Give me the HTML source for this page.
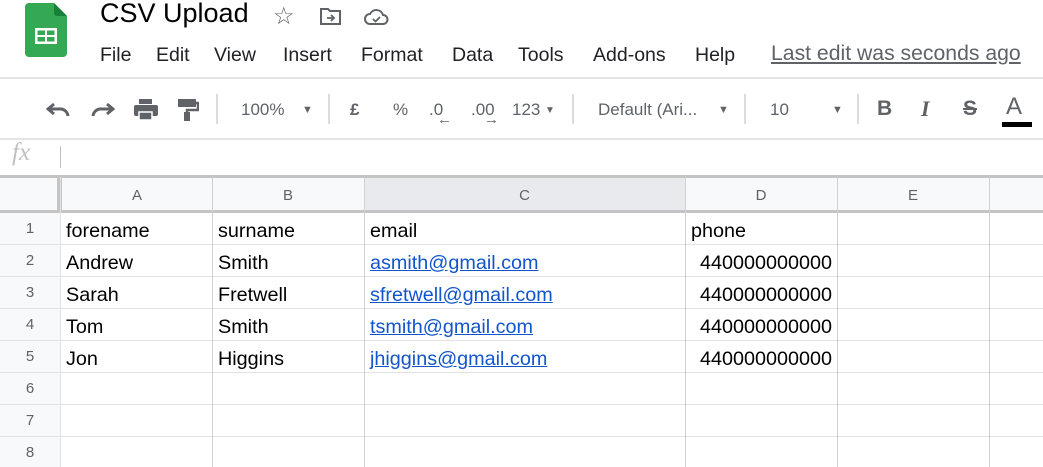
<!DOCTYPE html>
<html><head><meta charset="utf-8"><style>
*{margin:0;padding:0;box-sizing:border-box}
body{width:1043px;height:467px;overflow:hidden;background:#fff;font-family:"Liberation Sans",Arial,sans-serif;position:relative;color:#000}
.a{position:absolute}
.menu span{position:absolute;top:44px;font-size:19.5px;color:#202124}
.tb{color:#5f6368;font-size:17px;position:absolute;top:100px}
.sep{position:absolute;top:94px;width:2px;height:30px;background:#dadce0}
.hl{position:absolute;left:0;width:1043px;height:1px;background:#e2e2e2}
.vl{position:absolute;top:177px;width:1px;height:290px;background:#e2e2e2}
.ch{position:absolute;top:187px;font-size:15px;color:#5f6368;text-align:center}
.rn{position:absolute;left:0;width:60px;text-align:center;font-size:15px;color:#5f6368}
.c{position:absolute;font-size:19.8px}
.l{color:#1155cc;text-decoration:underline}
</style></head><body>
<svg class="a" style="left:25px;top:3px" width="42" height="55" viewBox="0 0 42 55">
<path d="M4 0H29L42 13V50a4 4 0 0 1-4 4H4a4 4 0 0 1-4-4V4a4 4 0 0 1 4-4z" fill="#34a853"/>
<path d="M29 0L42 13H32a3 3 0 0 1-3-3z" fill="#188038"/>
<rect x="10" y="25" width="22" height="16" fill="#fff"/>
<rect x="12.5" y="27.5" width="7.5" height="4.5" fill="#34a853"/><rect x="22" y="27.5" width="7.5" height="4.5" fill="#34a853"/>
<rect x="12.5" y="34" width="7.5" height="4.5" fill="#34a853"/><rect x="22" y="34" width="7.5" height="4.5" fill="#34a853"/>
</svg>
<div class="a" style="left:100px;top:-2px;font-size:27px;color:#000">CSV Upload</div>
<div class="a" style="left:273px;top:2px;font-size:24px;color:#5f6368">☆</div>
<svg class="a" style="left:320px;top:7px" width="22" height="18"><path d="M1 2h7l2 2h10v13H1z" fill="none" stroke="#5f6368" stroke-width="2"/><path d="M7 11h7M11 8l3 3-3 3" stroke="#5f6368" stroke-width="1.8" fill="none"/></svg>
<svg class="a" style="left:364px;top:8px" width="26" height="18"><path d="M6 16a5 5 0 0 1 0-10 7 7 0 0 1 13 1 4.5 4.5 0 0 1 0 9z" fill="none" stroke="#5f6368" stroke-width="2"/><path d="M9 11l2.5 2.5L16 9" stroke="#5f6368" stroke-width="1.8" fill="none"/></svg>
<div class="menu">
<span style="left:100px">File</span><span style="left:156px">Edit</span><span style="left:214px">View</span><span style="left:283px">Insert</span><span style="left:361px">Format</span><span style="left:452px">Data</span><span style="left:518px">Tools</span><span style="left:593px">Add-ons</span><span style="left:695px">Help</span>
<span style="left:771px;color:#5f6368;text-decoration:underline;font-size:21.2px;top:42px">Last edit was seconds ago</span>
</div>
<div class="hl" style="top:77px;height:2px;background:#e3e3e3"></div>
<svg class="a" style="left:46px;top:100px" width="26" height="18"><path d="M8 4L2 9l6 5" fill="none" stroke="#5f6368" stroke-width="3"/><path d="M3 9h10a8 8 0 0 1 9 7" fill="none" stroke="#5f6368" stroke-width="3"/></svg>
<svg class="a" style="left:89px;top:100px" width="26" height="18"><path d="M18 4l6 5-6 5" fill="none" stroke="#5f6368" stroke-width="3"/><path d="M23 9H13a8 8 0 0 0-9 7" fill="none" stroke="#5f6368" stroke-width="3"/></svg>
<svg class="a" style="left:133px;top:98px" width="26" height="24"><rect x="6" y="1" width="13" height="5" fill="#5f6368"/><rect x="1" y="7" width="24" height="11" rx="2" fill="#5f6368"/><rect x="6" y="14" width="13" height="8" fill="#5f6368" stroke="#fff" stroke-width="1.5"/></svg>
<svg class="a" style="left:177px;top:98px" width="22" height="24"><rect x="1" y="1" width="18" height="8" fill="#5f6368"/><path d="M19 5h2v7H10v10" fill="none" stroke="#5f6368" stroke-width="2.5"/><rect x="7" y="14" width="6" height="9" fill="#5f6368"/></svg>
<div class="sep" style="left:216px"></div>
<div class="tb" style="left:241px">100%</div>
<div class="tb" style="left:302px;font-size:11px;top:104px">▼</div>
<div class="sep" style="left:328px"></div>
<div class="tb" style="left:350px;font-weight:bold">£</div>
<div class="tb" style="left:393px">%</div>
<div class="tb" style="left:429px">.0</div>
<div class="a" style="left:437px;top:111px;font-size:15px;color:#5f6368;font-weight:bold">←</div>
<div class="tb" style="left:471px">.00</div>
<div class="a" style="left:484px;top:111px;font-size:15px;color:#5f6368;font-weight:bold">→</div>
<div class="tb" style="left:512px">123</div>
<div class="tb" style="left:545px;font-size:10px;top:105px">▼</div>
<div class="sep" style="left:572px"></div>
<div class="tb" style="left:598px">Default (Ari...</div>
<div class="tb" style="left:718px;font-size:11px;top:104px">▼</div>
<div class="sep" style="left:744px"></div>
<div class="tb" style="left:770px">10</div>
<div class="tb" style="left:832px;font-size:11px;top:104px">▼</div>
<div class="sep" style="left:857px"></div>
<div class="tb" style="left:877px;font-size:21px;top:97px;font-weight:bold">B</div>
<div class="tb" style="left:921px;font-size:22px;top:96px;font-style:italic;font-family:'Liberation Serif',serif;font-weight:bold">I</div>
<div class="tb" style="left:963px;font-size:21px;top:97px;text-decoration:line-through;font-weight:bold">S</div>
<div class="tb" style="left:1006px;font-size:24px;top:93px">A</div>
<div class="a" style="left:1002px;top:122px;width:30px;height:5px;background:#000"></div>
<div class="hl" style="top:138px;height:2px;background:#e3e3e3"></div>
<div class="a" style="left:12px;top:139px;font-size:25px;font-style:italic;font-family:'Liberation Serif',serif;color:#c0c0c0">fx</div>
<div class="a" style="left:60px;top:146px;width:1px;height:22px;background:#c0c0c0"></div>
<div class="a" style="left:0;top:176px;width:1043px;height:36px;background:#f8f9fa"></div>
<div class="a" style="left:364px;top:176px;width:321px;height:36px;background:#e8eaed"></div>
<div class="a" style="left:0;top:175px;width:1043px;height:3px;background:#c4c4c4"></div>
<div class="a" style="left:0;top:212px;width:60px;height:255px;background:#f8f9fa"></div>
<div class="a" style="left:0;top:210px;width:1043px;height:3px;background:#c4c4c4"></div>
<div class="a" style="left:57px;top:176px;width:5px;height:37px;background:#c4c4c4"></div>
<div class="hl" style="top:244px"></div><div class="hl" style="top:276px"></div><div class="hl" style="top:308px"></div><div class="hl" style="top:340px"></div><div class="hl" style="top:372px"></div><div class="hl" style="top:404px"></div><div class="hl" style="top:436px"></div>
<div class="vl" style="left:60px"></div><div class="vl" style="left:212px;background:#d0d0d0"></div><div class="vl" style="left:364px;background:#d0d0d0"></div><div class="vl" style="left:685px;background:#d0d0d0"></div><div class="vl" style="left:837px;background:#d0d0d0"></div><div class="vl" style="left:989px;background:#d0d0d0"></div>
<div class="ch" style="left:62px;width:150px">A</div><div class="ch" style="left:212px;width:152px">B</div><div class="ch" style="left:364px;width:321px">C</div><div class="ch" style="left:685px;width:152px">D</div><div class="ch" style="left:837px;width:152px">E</div>
<div class="rn" style="top:220px">1</div><div class="rn" style="top:252px">2</div><div class="rn" style="top:284px">3</div><div class="rn" style="top:316px">4</div><div class="rn" style="top:348px">5</div><div class="rn" style="top:380px">6</div><div class="rn" style="top:412px">7</div><div class="rn" style="top:444px">8</div>
<div class="c" style="left:66px;top:220px">forename</div><div class="c" style="left:218px;top:220px">surname</div><div class="c" style="left:370px;top:220px">email</div><div class="c" style="left:691px;top:220px">phone</div>
<div class="c" style="left:66px;top:252px">Andrew</div><div class="c" style="left:218px;top:252px">Smith</div><div class="c l" style="left:370px;top:252px">asmith@gmail.com</div><div class="c" style="left:700px;top:252px">440000000000</div>
<div class="c" style="left:66px;top:284px">Sarah</div><div class="c" style="left:218px;top:284px">Fretwell</div><div class="c l" style="left:370px;top:284px">sfretwell@gmail.com</div><div class="c" style="left:700px;top:284px">440000000000</div>
<div class="c" style="left:66px;top:316px">Tom</div><div class="c" style="left:218px;top:316px">Smith</div><div class="c l" style="left:370px;top:316px">tsmith@gmail.com</div><div class="c" style="left:700px;top:316px">440000000000</div>
<div class="c" style="left:66px;top:348px">Jon</div><div class="c" style="left:218px;top:348px">Higgins</div><div class="c l" style="left:370px;top:348px">jhiggins@gmail.com</div><div class="c" style="left:700px;top:348px">440000000000</div>
</body></html>
